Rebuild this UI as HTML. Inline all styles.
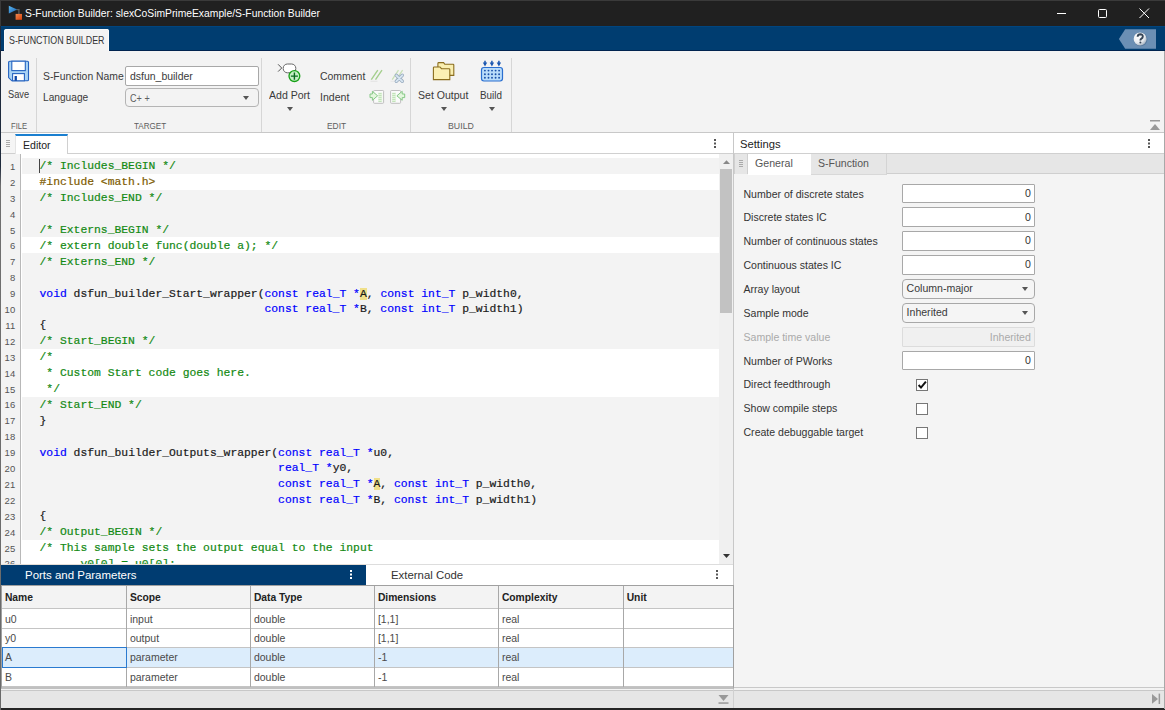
<!DOCTYPE html>
<html><head><meta charset="utf-8">
<style>
*{margin:0;padding:0;box-sizing:border-box}
html,body{width:1165px;height:710px;overflow:hidden;background:#f3f3f3;font-family:"Liberation Sans",sans-serif;}
.a{position:absolute}
.t{position:absolute;white-space:pre;line-height:1}
#titlebar{left:0;top:0;width:1165px;height:26px;background:#202020;border-top:1px solid #3a3a3a}
#band{left:0;top:26px;width:1165px;height:25px;background:#003d70;border-top:1.5px solid #00457f}
#ribbon{left:0;top:51px;width:1165px;height:82px;background:#f3f3f3;border-bottom:1px solid #c8c8c8}
.sep{position:absolute;width:1px;background:#d6d6d6}
.lbl{color:#777;font-size:10px}
.rt{color:#333;font-size:11.5px}
.dd{position:absolute;width:0;height:0;border-left:3.5px solid transparent;border-right:3.5px solid transparent;border-top:4px solid #555}
/* editor */
#edhead{left:1px;top:133px;width:732px;height:21px;background:#fff;border-bottom:1px solid #d0d0d0}
#code{left:1px;top:154px;width:732px;height:410px;background:#fff;overflow:hidden}
.ln{position:absolute;left:0;width:20px;height:16px;background:#f3f3f3}
.row{position:absolute;left:21px;width:697px;height:16px}
.g{background:#f3f3f3}
.num{position:absolute;font-family:"Liberation Sans",sans-serif;color:#555;line-height:1;white-space:pre}
.src{position:absolute;left:38.5px;font-family:"Liberation Mono",monospace;font-size:11.36px;color:#1a1a1a;line-height:1;white-space:pre;-webkit-text-stroke:0.2px}
.c{color:#138a13}.k{color:#0000ff}.p{color:#7d5b00}
.hl{background:#f0e08a}
/* settings */
#sethead{left:734px;top:133px;width:431px;height:21px;background:#fff;border-bottom:1px solid #d0d0d0}
#setbody{left:734px;top:154px;width:431px;height:534px;background:#f4f4f4;border-bottom:1px solid #c8c8c8}
.sl{position:absolute;left:743.5px;font-size:11px;color:#333;white-space:pre;line-height:1}
.inp{position:absolute;left:902px;width:133px;height:19.5px;background:#fff;border:1px solid #a8a8a8;border-radius:1px}
.inp span{position:absolute;right:4px;top:4px;font-size:11px;color:#333;line-height:1}
.cmb{position:absolute;left:902px;width:133px;height:19.5px;background:#f5f5f5;border:1px solid #a8a8a8;border-radius:4px}
.cmb span{position:absolute;left:4px;top:4px;font-size:11px;color:#333;line-height:1}
.cb{position:absolute;left:916px;width:12px;height:12px;background:#fff;border:1px solid #777}
/* table */
#pp{left:1px;top:565px;width:365px;height:20px;background:#003c71}
#ext{left:366px;top:564px;width:367px;height:21px;background:#fff;border-top:1px solid #ddd}
#tbl{left:1px;top:585px;width:733px;height:104px;background:#fff;border:1px solid #a0a0a0;border-bottom:2px solid #c0c0c0}
.th{position:absolute;font-weight:bold;font-size:11px;color:#222;line-height:1;white-space:pre}
.td{position:absolute;font-size:11px;color:#444;line-height:1;white-space:pre}
#status{left:0;top:689.5px;width:1165px;height:19px;background:#e6e6e6;border-top:1px solid #c8c8c8}
</style></head><body>

<!-- title bar -->
<div id="titlebar" class="a"></div>
<svg class="a" style="left:0;top:0" width="30" height="26" viewBox="0 0 30 26">
  <defs><linearGradient id="tri" x1="0" y1="0" x2="1" y2="1"><stop offset="0" stop-color="#5ab8f0"/><stop offset="1" stop-color="#1a5fb0"/></linearGradient>
  <linearGradient id="sq" x1="0" y1="0" x2="1" y2="1"><stop offset="0" stop-color="#f08a50"/><stop offset="1" stop-color="#d8400a"/></linearGradient></defs>
  <path d="M16.5 9.6 H18.9 V14" stroke="#5a5a5a" stroke-width="1.4" fill="none"/>
  <path d="M8.8 5.7 L17.2 9.6 L8.8 13.6 Z" fill="url(#tri)"/>
  <rect x="15.6" y="13.9" width="6.4" height="5.9" fill="url(#sq)"/>
</svg>
<div class="a" style="left:1057px;top:13px;width:9px;height:1px;background:#fff"></div>
<div class="a" style="left:1098px;top:9px;width:9px;height:9px;border:1px solid #fff;border-radius:1.5px"></div>
<svg class="a" style="left:1139px;top:8px" width="11" height="11" viewBox="0 0 11 11"><path d="M0.5 0.5 L10 10 M10 0.5 L0.5 10" stroke="#fff" stroke-width="1"/></svg>

<!-- blue band -->
<div id="band" class="a"></div>
<div class="a" style="left:0;top:49.9px;width:1165px;height:1.1px;background:#00234f"></div>
<div class="a" style="left:4px;top:29.3px;width:104.7px;height:22px;background:#f3f3f3;border-radius:2.5px 2.5px 0 0;box-shadow:inset 1px 1px 0 #fbfbfb,inset -1px 0 0 #fbfbfb"></div>
<svg class="a" style="left:1110px;top:26px" width="55" height="25" viewBox="1110 26 55 25">
  <path d="M1125.2 29.3 H1156 V48.8 H1125.2 L1118.9 39 Z" fill="#6b8fb4"/>
  <defs><radialGradient id="hg" cx="0.35" cy="0.3" r="0.8"><stop offset="0" stop-color="#ffffff"/><stop offset="0.6" stop-color="#e8ecf0"/><stop offset="1" stop-color="#9aa8b8"/></radialGradient></defs>
  <circle cx="1140.5" cy="39.4" r="6.9" fill="#4a6a8e" opacity="0.6"/>
  <circle cx="1140.1" cy="38.9" r="6.5" fill="url(#hg)"/>
  <path d="M1137.6 36.8 Q1137.8 34.2 1140.3 34.2 Q1142.9 34.3 1142.8 36.6 Q1142.7 38 1141.2 38.8 Q1140.4 39.3 1140.4 40.6" stroke="#354556" stroke-width="1.9" fill="none"/>
  <circle cx="1140.4" cy="42.6" r="1" fill="#354556"/>
</svg>

<!-- ribbon -->
<div id="ribbon" class="a"></div>
<!-- save icon -->
<svg class="a" style="left:0;top:55px" width="36" height="30" viewBox="0 55 36 30">
  <path d="M9.5 61.2 H27.5 Q28.5 61.2 28.5 62.2 V79.8 Q28.5 80.8 27.5 80.8 H11.8 L8.6 77.6 V62.2 Q8.6 61.2 9.6 61.2 Z" fill="#a9d3f5" stroke="#2563c0" stroke-width="1.1"/>
  <rect x="11.8" y="61.2" width="13.5" height="9.4" fill="#fff" stroke="#2563c0" stroke-width="1.1"/>
  <rect x="12.6" y="73.6" width="11.8" height="7.2" fill="#fff" stroke="#2563c0" stroke-width="1.1"/>
  <rect x="14.6" y="76" width="2.3" height="4.8" fill="#0c47a8"/>
</svg>
<div class="sep" style="left:36px;top:58px;height:74px"></div>

<div class="a" style="left:125px;top:66px;width:134px;height:20px;background:#fff;border:1px solid #a8a8a8;border-radius:2px"></div>
<div class="a" style="left:125px;top:88px;width:134px;height:19px;background:#f3f3f3;border:1px solid #b4b4b4;border-radius:4px"></div>
<div class="dd" style="left:243px;top:95.5px"></div>
<div class="sep" style="left:261px;top:58px;height:74px"></div>

<!-- add port -->
<svg class="a" style="left:270px;top:58px" width="35" height="28" viewBox="270 58 35 28">
  <path d="M278.1 64.3 L281.7 68 L278.1 71.6" stroke="#555" fill="none" stroke-width="1"/>
  <rect x="283.2" y="64" width="12.6" height="8.8" rx="4.2" fill="#fff" stroke="#666" stroke-width="1"/>
  <circle cx="294.4" cy="76.1" r="5.4" fill="#c5efc5" stroke="#16a016" stroke-width="1.3"/>
  <path d="M294.4 72.6 V79.7 M290.9 76.1 H297.9" stroke="#0a6a20" stroke-width="1.4"/>
</svg>
<div class="dd" style="left:287px;top:106.5px"></div>
<svg class="a" style="left:366px;top:66px" width="42" height="40" viewBox="366 66 42 40">
  <path d="M371.3 79.6 L377.8 70.2 M375.5 79.6 L382 70.2" stroke="#a5cf8e" stroke-width="1.4"/>
  <path d="M370.5 81.3 H377.5" stroke="#dedede" stroke-width="0.8"/>
  <path d="M392.2 79.6 L398.5 70.2 M396.3 79.6 L402.6 70.2" stroke="#c8e0b8" stroke-width="1.3"/>
  <path d="M390.6 81.3 H396" stroke="#e2e2e2" stroke-width="0.8"/>
  <path d="M396.3 75.3 L402.3 81.3 M402.3 75.3 L396.3 81.3" stroke="#9aacbf" stroke-width="3.4" stroke-linecap="round"/>
  <path d="M396.3 75.3 L402.3 81.3 M402.3 75.3 L396.3 81.3" stroke="#d8e6f2" stroke-width="1.8" stroke-linecap="round"/>
  <rect x="373.6" y="90.5" width="10" height="12.8" rx="0.8" fill="#fbfbfb" stroke="#b8b8b8" stroke-width="0.9"/>
  <rect x="378.2" y="92.6" width="4" height="9.5" fill="#e2f6dc"/>
  <path d="M378.5 93.5 H381.5 M378.5 95.5 H381.5 M378.5 97.5 H381.5 M378.5 99.5 H381.5 M378.5 101.5 H381.5" stroke="#b6d8ac" stroke-width="0.7"/>
  <path d="M377.6 95.8 L372.4 91.3 V94 H370 V97.6 H372.4 V100.3 Z" fill="#e4f7de" stroke="#86c886" stroke-width="1"/>
  <rect x="390.6" y="90.5" width="10" height="12.8" rx="0.8" fill="#fbfbfb" stroke="#b8b8b8" stroke-width="0.9"/>
  <rect x="392" y="92.6" width="4" height="9.5" fill="#e2f6dc"/>
  <path d="M392.3 93.5 H395.3 M392.3 95.5 H395.3 M392.3 97.5 H395.3 M392.3 99.5 H395.3 M392.3 101.5 H395.3" stroke="#b6d8ac" stroke-width="0.7"/>
  <path d="M396.9 95.8 L402.2 91.3 V94 H404.7 V97.6 H402.2 V100.3 Z" fill="#e4f7de" stroke="#86c886" stroke-width="1"/>
</svg>
<div class="sep" style="left:410px;top:58px;height:74px"></div>

<!-- set output -->
<svg class="a" style="left:428px;top:56px" width="30" height="28" viewBox="428 56 30 28">
  <path d="M437.9 75.4 V63.4 Q437.9 62.6 438.7 62.6 H443.6 L444.8 64.3 H453.1 Q453.8 64.3 453.8 65 V75.4 Z" fill="#f9eeb0" stroke="#8a6d1e" stroke-width="1.1"/>
  <path d="M433.4 79.6 V67.8 Q433.4 67 434.2 67 H440 L441.4 68.7 H449 Q449.8 68.7 449.8 69.5 V79.6 Z" fill="#fbf0b4" stroke="#8a6d1e" stroke-width="1.1"/>
</svg>
<div class="dd" style="left:441px;top:107px"></div>
<svg class="a" style="left:476px;top:56px" width="32" height="30" viewBox="476 56 32 30">
  <rect x="481.5" y="67.5" width="21" height="13.5" rx="2.4" fill="#b9dcfa" stroke="#2a6fd0" stroke-width="1.2"/>
  <path d="M485 60.8 V63.5 M491.9 60.8 V63.5 M498.9 60.8 V63.5" stroke="#1a56b0" stroke-width="1.5"/>
  <path d="M482.8 62.6 L485 66.6 L487.2 62.6 Z M489.7 62.6 L491.9 66.6 L494.1 62.6 Z M496.7 62.6 L498.9 66.6 L501.1 62.6 Z" fill="#1a56b0"/>
  <g fill="#1a50a8"><circle cx="484.9" cy="70.6" r="0.95"/><circle cx="488.5" cy="70.6" r="0.95"/><circle cx="492" cy="70.6" r="0.95"/><circle cx="495.6" cy="70.6" r="0.95"/><circle cx="499.1" cy="70.6" r="0.95"/><circle cx="484.9" cy="74.2" r="0.95"/><circle cx="488.5" cy="74.2" r="0.95"/><circle cx="492" cy="74.2" r="0.95"/><circle cx="495.6" cy="74.2" r="0.95"/><circle cx="499.1" cy="74.2" r="0.95"/><circle cx="484.9" cy="77.8" r="0.95"/><circle cx="488.5" cy="77.8" r="0.95"/><circle cx="492" cy="77.8" r="0.95"/><circle cx="495.6" cy="77.8" r="0.95"/><circle cx="499.1" cy="77.8" r="0.95"/></g>
</svg>
<div class="dd" style="left:488.5px;top:107px"></div>
<div class="sep" style="left:511px;top:58px;height:74px"></div>
<!-- collapse ribbon -->
<svg class="a" style="left:1149px;top:120px" width="12" height="11" viewBox="0 0 12 11"><rect x="1" y="0" width="10" height="1.5" fill="#999"/><path d="M1 10 L6 4 L11 10 Z" fill="#999"/></svg>

<!-- editor header -->
<div id="edhead" class="a"></div>
<div class="a" style="left:1px;top:133px;width:14px;height:20px;background:#f5f5f5"></div>
<div class="a" style="left:6px;top:140px;width:4px;height:7px;background:repeating-linear-gradient(#aaa 0 1px,transparent 1px 2px)"></div>
<div class="a" style="left:15px;top:134px;width:53px;height:20px;background:#fff;border-top:2px solid #1a7fd0;border-right:1px solid #d0d0d0;border-left:1px solid #e4e4e4"></div>
<div class="a" style="left:714px;top:139px;width:1.7px;height:1.7px;background:#555;box-shadow:0 3.5px 0 #555,0 7px 0 #555"></div>

<!-- code -->
<div id="code" class="a">
 <div class="a" style="left:0;top:0;width:20px;height:410px;background:#f3f3f3"></div>
 <div class="a" style="left:19px;top:0;width:1px;height:410px;background:#b8b8b8"></div>
 <div class="row g" style="top:4.00px;height:15.9px"></div>
<div class="num" style="top:7.96px;left:0;width:14.2px;text-align:right;font-size:9.5px">1</div>
<div class="src" style="top:7.39px;font-size:11.363px"><span class=c>/* Includes_BEGIN */</span></div>
<div class="row" style="top:19.90px;height:15.9px"></div>
<div class="num" style="top:23.86px;left:0;width:14.2px;text-align:right;font-size:9.5px">2</div>
<div class="src" style="top:23.29px;font-size:11.363px"><span class=p>#include &lt;math.h&gt;</span></div>
<div class="row g" style="top:35.80px;height:15.9px"></div>
<div class="num" style="top:39.76px;left:0;width:14.2px;text-align:right;font-size:9.5px">3</div>
<div class="src" style="top:39.19px;font-size:11.363px"><span class=c>/* Includes_END */</span></div>
<div class="row g" style="top:51.70px;height:15.9px"></div>
<div class="num" style="top:55.66px;left:0;width:14.2px;text-align:right;font-size:9.5px">4</div>
<div class="src" style="top:55.09px;font-size:11.363px"></div>
<div class="row g" style="top:67.60px;height:15.9px"></div>
<div class="num" style="top:71.56px;left:0;width:14.2px;text-align:right;font-size:9.5px">5</div>
<div class="src" style="top:70.99px;font-size:11.363px"><span class=c>/* Externs_BEGIN */</span></div>
<div class="row" style="top:83.50px;height:15.9px"></div>
<div class="num" style="top:87.46px;left:0;width:14.2px;text-align:right;font-size:9.5px">6</div>
<div class="src" style="top:86.89px;font-size:11.363px"><span class=c>/* extern double func(double a); */</span></div>
<div class="row g" style="top:99.40px;height:15.9px"></div>
<div class="num" style="top:103.36px;left:0;width:14.2px;text-align:right;font-size:9.5px">7</div>
<div class="src" style="top:102.79px;font-size:11.363px"><span class=c>/* Externs_END */</span></div>
<div class="row g" style="top:115.30px;height:15.9px"></div>
<div class="num" style="top:119.26px;left:0;width:14.2px;text-align:right;font-size:9.5px">8</div>
<div class="src" style="top:118.69px;font-size:11.363px"></div>
<div class="row g" style="top:131.20px;height:15.9px"></div>
<div class="num" style="top:135.16px;left:0;width:14.2px;text-align:right;font-size:9.5px">9</div>
<div class="src" style="top:134.59px;font-size:11.363px"><span class=k>void</span> dsfun_builder_Start_wrapper(<span class=k>const real_T *</span><span class=hl>A</span>, <span class=k>const int_T</span> p_width0,</div>
<div class="row g" style="top:147.10px;height:15.9px"></div>
<div class="num" style="top:151.06px;left:0;width:14.2px;text-align:right;font-size:9.5px">10</div>
<div class="src" style="top:150.49px;font-size:11.363px">                                 <span class=k>const real_T *</span>B, <span class=k>const int_T</span> p_width1)</div>
<div class="row g" style="top:163.00px;height:15.9px"></div>
<div class="num" style="top:166.96px;left:0;width:14.2px;text-align:right;font-size:9.5px">11</div>
<div class="src" style="top:166.39px;font-size:11.363px">{</div>
<div class="row g" style="top:178.90px;height:15.9px"></div>
<div class="num" style="top:182.86px;left:0;width:14.2px;text-align:right;font-size:9.5px">12</div>
<div class="src" style="top:182.29px;font-size:11.363px"><span class=c>/* Start_BEGIN */</span></div>
<div class="row" style="top:194.80px;height:15.9px"></div>
<div class="num" style="top:198.76px;left:0;width:14.2px;text-align:right;font-size:9.5px">13</div>
<div class="src" style="top:198.19px;font-size:11.363px"><span class=c>/*</span></div>
<div class="row" style="top:210.70px;height:15.9px"></div>
<div class="num" style="top:214.66px;left:0;width:14.2px;text-align:right;font-size:9.5px">14</div>
<div class="src" style="top:214.09px;font-size:11.363px"><span class=c> * Custom Start code goes here.</span></div>
<div class="row" style="top:226.60px;height:15.9px"></div>
<div class="num" style="top:230.56px;left:0;width:14.2px;text-align:right;font-size:9.5px">15</div>
<div class="src" style="top:229.99px;font-size:11.363px"><span class=c> */</span></div>
<div class="row g" style="top:242.50px;height:15.9px"></div>
<div class="num" style="top:246.46px;left:0;width:14.2px;text-align:right;font-size:9.5px">16</div>
<div class="src" style="top:245.89px;font-size:11.363px"><span class=c>/* Start_END */</span></div>
<div class="row g" style="top:258.40px;height:15.9px"></div>
<div class="num" style="top:262.36px;left:0;width:14.2px;text-align:right;font-size:9.5px">17</div>
<div class="src" style="top:261.79px;font-size:11.363px">}</div>
<div class="row g" style="top:274.30px;height:15.9px"></div>
<div class="num" style="top:278.26px;left:0;width:14.2px;text-align:right;font-size:9.5px">18</div>
<div class="src" style="top:277.69px;font-size:11.363px"></div>
<div class="row g" style="top:290.20px;height:15.9px"></div>
<div class="num" style="top:294.16px;left:0;width:14.2px;text-align:right;font-size:9.5px">19</div>
<div class="src" style="top:293.59px;font-size:11.363px"><span class=k>void</span> dsfun_builder_Outputs_wrapper(<span class=k>const real_T *</span>u0,</div>
<div class="row g" style="top:306.10px;height:15.9px"></div>
<div class="num" style="top:310.06px;left:0;width:14.2px;text-align:right;font-size:9.5px">20</div>
<div class="src" style="top:309.49px;font-size:11.363px">                                   <span class=k>real_T *</span>y0,</div>
<div class="row g" style="top:322.00px;height:15.9px"></div>
<div class="num" style="top:325.96px;left:0;width:14.2px;text-align:right;font-size:9.5px">21</div>
<div class="src" style="top:325.39px;font-size:11.363px">                                   <span class=k>const real_T *</span><span class=hl>A</span>, <span class=k>const int_T</span> p_width0,</div>
<div class="row g" style="top:337.90px;height:15.9px"></div>
<div class="num" style="top:341.86px;left:0;width:14.2px;text-align:right;font-size:9.5px">22</div>
<div class="src" style="top:341.29px;font-size:11.363px">                                   <span class=k>const real_T *</span>B, <span class=k>const int_T</span> p_width1)</div>
<div class="row g" style="top:353.80px;height:15.9px"></div>
<div class="num" style="top:357.76px;left:0;width:14.2px;text-align:right;font-size:9.5px">23</div>
<div class="src" style="top:357.19px;font-size:11.363px">{</div>
<div class="row g" style="top:369.70px;height:15.9px"></div>
<div class="num" style="top:373.66px;left:0;width:14.2px;text-align:right;font-size:9.5px">24</div>
<div class="src" style="top:373.09px;font-size:11.363px"><span class=c>/* Output_BEGIN */</span></div>
<div class="row" style="top:385.60px;height:15.9px"></div>
<div class="num" style="top:389.56px;left:0;width:14.2px;text-align:right;font-size:9.5px">25</div>
<div class="src" style="top:388.99px;font-size:11.363px"><span class=c>/* This sample sets the output equal to the input</span></div>
<div class="row" style="top:401.50px;height:15.9px"></div>
<div class="num" style="top:405.46px;left:0;width:14.2px;text-align:right;font-size:9.5px">26</div>
<div class="src" style="top:404.89px;font-size:11.363px"><span class=c>      y0[0] = u0[0];</span></div>
<div class="a" style="left:38.3px;top:4.5px;width:1px;height:14.5px;background:#444"></div>
 <!-- scrollbar -->
 <div class="a" style="left:718px;top:0;width:14px;height:410px;background:#f0f0f0"></div>
 <svg class="a" style="left:722px;top:5.5px" width="7" height="4"><path d="M0 4 L3.5 0.3 L7 4Z" fill="#888"/></svg>
 <div class="a" style="left:719px;top:14.6px;width:12px;height:144.6px;background:#c2c2c2"></div>
 <svg class="a" style="left:722.3px;top:400px" width="7" height="4.5"><path d="M0 0 L3.5 4 L7 0Z" fill="#333"/></svg>
</div>

<!-- settings -->
<div id="sethead" class="a"></div>
<div class="a" style="left:733px;top:133px;width:1px;height:556px;background:#c8c8c8"></div>
<div class="a" style="left:1148px;top:139px;width:1.7px;height:1.7px;background:#555;box-shadow:0 3.5px 0 #555,0 7px 0 #555"></div>
<div id="setbody" class="a"></div>
<div class="a" style="left:734px;top:154px;width:431px;height:20px;background:#e6e6e6;border-bottom:1px solid #cfcfcf"></div>
<div class="a" style="left:734px;top:154px;width:13.5px;height:20px;background:#e6e6e6;border-right:1px solid #d0d0d0;border-left:1px solid #d0d0d0"></div>
<div class="a" style="left:739px;top:160px;width:4px;height:7px;background:repeating-linear-gradient(#aaa 0 1px,transparent 1px 2px)"></div>
<div class="a" style="left:747.5px;top:154px;width:63px;height:20.5px;background:#fff"></div>
<div class="a" style="left:810.5px;top:154px;width:76px;height:20.5px;background:#e6e6e6;border-right:1px solid #d4d4d4;border-bottom:1px solid #d8d8d8"></div>


<div class="inp" style="top:183.7px"></div>
<div class="inp" style="top:207.3px"></div>
<div class="inp" style="top:231px"></div>
<div class="inp" style="top:255px"></div>
<div class="cmb" style="top:279.2px"></div>
<div class="dd" style="left:1022px;top:287px"></div>
<div class="cmb" style="top:303px"></div>
<div class="dd" style="left:1022px;top:311px"></div>
<div class="inp" style="top:327px;background:#f0f0f0;border-color:#dcdcdc"></div>
<div class="inp" style="top:350.5px"></div>
<div class="cb" style="top:379px"></div>
<svg class="a" style="left:917px;top:380px" width="10" height="10" viewBox="0 0 10 10"><path d="M1.6 5 L4 7.6 L8.9 1.6" stroke="#111" stroke-width="2" fill="none"/></svg>
<div class="cb" style="top:403px"></div>
<div class="cb" style="top:426.5px"></div>

<!-- ports and params -->
<div class="a" style="left:1px;top:564px;width:732px;height:1px;background:#e4ddd6"></div>
<div id="pp" class="a"></div>
<div class="a" style="left:350px;top:570px;width:1.8px;height:1.8px;background:#fff;box-shadow:0 3.5px 0 #fff,0 7px 0 #fff"></div>
<div id="ext" class="a"></div>
<div class="a" style="left:716px;top:570px;width:1.7px;height:1.7px;background:#555;box-shadow:0 3.5px 0 #555,0 7px 0 #555"></div>
<div id="tbl" class="a"></div>
<div class="a" style="left:2px;top:586px;width:731px;height:22.4px;background:#f3f3f3"></div>
<div class="a" style="left:2px;top:647.8px;width:731px;height:19.5px;background:#dcedfc"></div>
<div class="a" style="left:2px;top:607.9px;width:731px;height:1px;background:#c4c4c4"></div>
<div class="a" style="left:2px;top:627.9px;width:731px;height:1px;background:#c4c4c4"></div>
<div class="a" style="left:2px;top:647.3px;width:731px;height:1px;background:#c4c4c4"></div>
<div class="a" style="left:2px;top:666.8px;width:731px;height:1px;background:#c4c4c4"></div>
<div class="a" style="left:2px;top:686.0px;width:731px;height:1px;background:#c4c4c4"></div>
<div class="a" style="left:126.0px;top:586px;width:1px;height:101px;background:#a8a8a8"></div>
<div class="a" style="left:250.0px;top:586px;width:1px;height:101px;background:#a8a8a8"></div>
<div class="a" style="left:374.0px;top:586px;width:1px;height:101px;background:#a8a8a8"></div>
<div class="a" style="left:498.0px;top:586px;width:1px;height:101px;background:#a8a8a8"></div>
<div class="a" style="left:622.8px;top:586px;width:1px;height:101px;background:#a8a8a8"></div>
<div class="a" style="left:1.5px;top:647.3px;width:125.5px;height:20.5px;border:1.5px solid #2a7ad0"></div>

<!-- status bar -->
<div id="status" class="a"></div>
<div class="a" style="left:733px;top:689px;width:1px;height:20px;background:#d0d0d0"></div>
<div class="a" style="left:0;top:708.4px;width:1165px;height:1.6px;background:#262626"></div>
<svg class="a" style="left:718px;top:695px" width="11" height="9" viewBox="0 0 11 9"><path d="M0.5 0 L10.5 0 L5.5 6 Z" fill="#999"/><rect x="0.5" y="7.3" width="10" height="1.5" fill="#999"/></svg>
<svg class="a" style="left:1150px;top:692px" width="12" height="14" viewBox="1150 692 12 14"><path d="M1152 694 L1158 698.9 L1152 703.8 Z" fill="#999"/><rect x="1158.6" y="693.6" width="1.5" height="10.4" fill="#999"/></svg>

<div class="t" style="left:24.50px;top:8.11px;font-size:10.5px;color:#fff;font-family:'Liberation Sans',sans-serif;transform:scaleX(0.9834);transform-origin:0 0;">S-Function Builder: slexCoSimPrimeExample/S-Function Builder</div>
<div class="t" style="left:8.50px;top:34.81px;font-size:10.5px;color:#333;font-family:'Liberation Sans',sans-serif;transform:scaleX(0.8437);transform-origin:0 0;">S-FUNCTION BUILDER</div>
<div class="t" style="left:8.10px;top:89.78px;font-size:10.3px;color:#3a3a3a;font-family:'Liberation Sans',sans-serif;transform:scaleX(0.8985);transform-origin:0 0;">Save</div>
<div class="t" style="left:10.80px;top:122.11px;font-size:9.2px;color:#5e5e5e;font-family:'Liberation Sans',sans-serif;transform:scaleX(0.8345);transform-origin:0 0;">FILE</div>
<div class="t" style="left:43.00px;top:71.21px;font-size:10.5px;color:#3a3a3a;font-family:'Liberation Sans',sans-serif;transform:scaleX(0.9879);transform-origin:0 0;">S-Function Name</div>
<div class="t" style="left:43.00px;top:92.21px;font-size:10.5px;color:#3a3a3a;font-family:'Liberation Sans',sans-serif;transform:scaleX(0.9674);transform-origin:0 0;">Language</div>
<div class="t" style="left:130.20px;top:71.01px;font-size:10.5px;color:#3a3a3a;font-family:'Liberation Sans',sans-serif;transform:scaleX(0.9960);transform-origin:0 0;">dsfun_builder</div>
<div class="t" style="left:130.20px;top:92.51px;font-size:10.5px;color:#5e5e5e;font-family:'Liberation Sans',sans-serif;transform:scaleX(0.8646);transform-origin:0 0;">C+ +</div>
<div class="t" style="left:133.50px;top:122.11px;font-size:9.2px;color:#5e5e5e;font-family:'Liberation Sans',sans-serif;transform:scaleX(0.8794);transform-origin:0 0;">TARGET</div>
<div class="t" style="left:269.00px;top:89.81px;font-size:10.5px;color:#3a3a3a;font-family:'Liberation Sans',sans-serif;transform:scaleX(1.0038);transform-origin:0 0;">Add Port</div>
<div class="t" style="left:319.70px;top:71.11px;font-size:10.5px;color:#3a3a3a;font-family:'Liberation Sans',sans-serif;transform:scaleX(0.9952);transform-origin:0 0;">Comment</div>
<div class="t" style="left:319.70px;top:92.41px;font-size:10.5px;color:#3a3a3a;font-family:'Liberation Sans',sans-serif;transform:scaleX(1.0038);transform-origin:0 0;">Indent</div>
<div class="t" style="left:326.60px;top:122.11px;font-size:9.2px;color:#5e5e5e;font-family:'Liberation Sans',sans-serif;transform:scaleX(0.9153);transform-origin:0 0;">EDIT</div>
<div class="t" style="left:417.60px;top:89.51px;font-size:10.5px;color:#3a3a3a;font-family:'Liberation Sans',sans-serif;transform:scaleX(1.0042);transform-origin:0 0;">Set Output</div>
<div class="t" style="left:480.00px;top:89.51px;font-size:10.5px;color:#3a3a3a;font-family:'Liberation Sans',sans-serif;transform:scaleX(0.9417);transform-origin:0 0;">Build</div>
<div class="t" style="left:447.80px;top:122.11px;font-size:9.2px;color:#5e5e5e;font-family:'Liberation Sans',sans-serif;transform:scaleX(0.9559);transform-origin:0 0;">BUILD</div>
<div class="t" style="left:22.50px;top:139.69px;font-size:11px;color:#222;font-family:'Liberation Sans',sans-serif;transform:scaleX(0.9579);transform-origin:0 0;">Editor</div>
<div class="t" style="left:739.50px;top:138.99px;font-size:11px;color:#222;font-family:'Liberation Sans',sans-serif;transform:scaleX(1.0185);transform-origin:0 0;">Settings</div>
<div class="t" style="left:754.70px;top:158.09px;font-size:11px;color:#555;font-family:'Liberation Sans',sans-serif;transform:scaleX(0.9653);transform-origin:0 0;">General</div>
<div class="t" style="left:817.60px;top:158.09px;font-size:11px;color:#555;font-family:'Liberation Sans',sans-serif;transform:scaleX(0.9570);transform-origin:0 0;">S-Function</div>
<div class="t" style="left:743.50px;top:188.57px;font-size:10.55px;color:#333;font-family:'Liberation Sans',sans-serif;">Number of discrete states</div>
<div class="t" style="left:743.50px;top:212.17px;font-size:10.55px;color:#333;font-family:'Liberation Sans',sans-serif;">Discrete states IC</div>
<div class="t" style="left:743.50px;top:236.07px;font-size:10.55px;color:#333;font-family:'Liberation Sans',sans-serif;">Number of continuous states</div>
<div class="t" style="left:743.50px;top:260.07px;font-size:10.55px;color:#333;font-family:'Liberation Sans',sans-serif;">Continuous states IC</div>
<div class="t" style="left:743.50px;top:284.27px;font-size:10.55px;color:#333;font-family:'Liberation Sans',sans-serif;">Array layout</div>
<div class="t" style="left:743.50px;top:307.97px;font-size:10.55px;color:#333;font-family:'Liberation Sans',sans-serif;">Sample mode</div>
<div class="t" style="left:743.50px;top:331.87px;font-size:10.55px;color:#aaa;font-family:'Liberation Sans',sans-serif;">Sample time value</div>
<div class="t" style="left:743.50px;top:355.57px;font-size:10.55px;color:#333;font-family:'Liberation Sans',sans-serif;">Number of PWorks</div>
<div class="t" style="left:743.50px;top:379.47px;font-size:10.55px;color:#333;font-family:'Liberation Sans',sans-serif;">Direct feedthrough</div>
<div class="t" style="left:743.50px;top:403.37px;font-size:10.55px;color:#333;font-family:'Liberation Sans',sans-serif;">Show compile steps</div>
<div class="t" style="left:743.50px;top:427.37px;font-size:10.55px;color:#333;font-family:'Liberation Sans',sans-serif;">Create debuggable target</div>
<div class="t" style="left:1024.94px;top:187.87px;font-size:10.55px;color:#333;font-family:'Liberation Sans',sans-serif;">0</div>
<div class="t" style="left:1024.94px;top:211.67px;font-size:10.55px;color:#333;font-family:'Liberation Sans',sans-serif;">0</div>
<div class="t" style="left:1024.94px;top:235.47px;font-size:10.55px;color:#333;font-family:'Liberation Sans',sans-serif;">0</div>
<div class="t" style="left:1024.94px;top:259.37px;font-size:10.55px;color:#333;font-family:'Liberation Sans',sans-serif;">0</div>
<div class="t" style="left:1024.94px;top:355.27px;font-size:10.55px;color:#333;font-family:'Liberation Sans',sans-serif;">0</div>
<div class="t" style="left:906.60px;top:283.37px;font-size:10.55px;color:#3a3a3a;font-family:'Liberation Sans',sans-serif;">Column-major</div>
<div class="t" style="left:906.60px;top:307.27px;font-size:10.55px;color:#3a3a3a;font-family:'Liberation Sans',sans-serif;">Inherited</div>
<div class="t" style="left:989.76px;top:331.57px;font-size:10.55px;color:#aaa;font-family:'Liberation Sans',sans-serif;">Inherited</div>
<div class="t" style="left:24.50px;top:569.67px;font-size:11.5px;color:#fff;font-family:'Liberation Sans',sans-serif;transform:scaleX(0.9970);transform-origin:0 0;">Ports and Parameters</div>
<div class="t" style="left:390.50px;top:569.87px;font-size:11.5px;color:#333;font-family:'Liberation Sans',sans-serif;transform:scaleX(0.9897);transform-origin:0 0;">External Code</div>
<div class="t" style="left:4.90px;top:592.88px;font-size:10.3px;color:#222;font-weight:bold;font-family:'Liberation Sans',sans-serif;">Name</div>
<div class="t" style="left:129.90px;top:592.88px;font-size:10.3px;color:#222;font-weight:bold;font-family:'Liberation Sans',sans-serif;">Scope</div>
<div class="t" style="left:253.90px;top:592.88px;font-size:10.3px;color:#222;font-weight:bold;font-family:'Liberation Sans',sans-serif;">Data Type</div>
<div class="t" style="left:377.90px;top:592.88px;font-size:10.3px;color:#222;font-weight:bold;font-family:'Liberation Sans',sans-serif;">Dimensions</div>
<div class="t" style="left:501.90px;top:592.88px;font-size:10.3px;color:#222;font-weight:bold;font-family:'Liberation Sans',sans-serif;">Complexity</div>
<div class="t" style="left:626.70px;top:592.88px;font-size:10.3px;color:#222;font-weight:bold;font-family:'Liberation Sans',sans-serif;">Unit</div>
<div class="t" style="left:4.90px;top:613.81px;font-size:10.5px;color:#4a4a4a;font-family:'Liberation Sans',sans-serif;">u0</div>
<div class="t" style="left:129.90px;top:613.81px;font-size:10.5px;color:#4a4a4a;font-family:'Liberation Sans',sans-serif;">input</div>
<div class="t" style="left:253.90px;top:613.81px;font-size:10.5px;color:#4a4a4a;font-family:'Liberation Sans',sans-serif;">double</div>
<div class="t" style="left:377.90px;top:613.81px;font-size:10.5px;color:#4a4a4a;font-family:'Liberation Sans',sans-serif;">[1,1]</div>
<div class="t" style="left:501.90px;top:613.81px;font-size:10.5px;color:#4a4a4a;font-family:'Liberation Sans',sans-serif;">real</div>
<div class="t" style="left:4.90px;top:633.11px;font-size:10.5px;color:#4a4a4a;font-family:'Liberation Sans',sans-serif;">y0</div>
<div class="t" style="left:129.90px;top:633.11px;font-size:10.5px;color:#4a4a4a;font-family:'Liberation Sans',sans-serif;">output</div>
<div class="t" style="left:253.90px;top:633.11px;font-size:10.5px;color:#4a4a4a;font-family:'Liberation Sans',sans-serif;">double</div>
<div class="t" style="left:377.90px;top:633.11px;font-size:10.5px;color:#4a4a4a;font-family:'Liberation Sans',sans-serif;">[1,1]</div>
<div class="t" style="left:501.90px;top:633.11px;font-size:10.5px;color:#4a4a4a;font-family:'Liberation Sans',sans-serif;">real</div>
<div class="t" style="left:4.90px;top:652.31px;font-size:10.5px;color:#4a4a4a;font-family:'Liberation Sans',sans-serif;">A</div>
<div class="t" style="left:129.90px;top:652.31px;font-size:10.5px;color:#4a4a4a;font-family:'Liberation Sans',sans-serif;">parameter</div>
<div class="t" style="left:253.90px;top:652.31px;font-size:10.5px;color:#4a4a4a;font-family:'Liberation Sans',sans-serif;">double</div>
<div class="t" style="left:377.90px;top:652.31px;font-size:10.5px;color:#4a4a4a;font-family:'Liberation Sans',sans-serif;">-1</div>
<div class="t" style="left:501.90px;top:652.31px;font-size:10.5px;color:#4a4a4a;font-family:'Liberation Sans',sans-serif;">real</div>
<div class="t" style="left:4.90px;top:671.51px;font-size:10.5px;color:#4a4a4a;font-family:'Liberation Sans',sans-serif;">B</div>
<div class="t" style="left:129.90px;top:671.51px;font-size:10.5px;color:#4a4a4a;font-family:'Liberation Sans',sans-serif;">parameter</div>
<div class="t" style="left:253.90px;top:671.51px;font-size:10.5px;color:#4a4a4a;font-family:'Liberation Sans',sans-serif;">double</div>
<div class="t" style="left:377.90px;top:671.51px;font-size:10.5px;color:#4a4a4a;font-family:'Liberation Sans',sans-serif;">-1</div>
<div class="t" style="left:501.90px;top:671.51px;font-size:10.5px;color:#4a4a4a;font-family:'Liberation Sans',sans-serif;">real</div>
<!-- window left border -->
<div class="a" style="left:0;top:0;width:1px;height:26px;background:#3a3a3a"></div>
<div class="a" style="left:0;top:26px;width:1px;height:684px;background:linear-gradient(#1e2a3c 0 140px,#707070 160px,#6a6a6a 100%)"></div>
<div class="a" style="left:1164px;top:51px;width:1px;height:658px;background:#a8a8a8"></div>
</body></html>
